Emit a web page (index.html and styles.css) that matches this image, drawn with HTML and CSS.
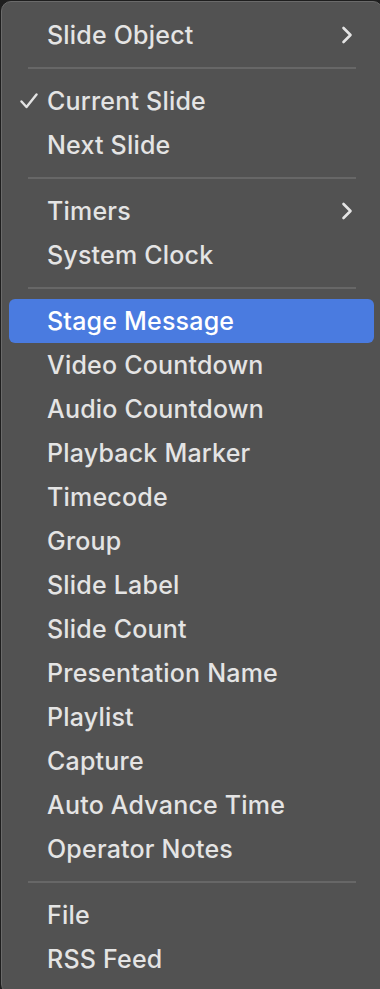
FILE: index.html
```html
<!DOCTYPE html>
<html lang="en">
<head>
    <meta charset="UTF-8">
    <meta name="viewport" content="width=device-width, initial-scale=1.0">
    <title>Stage Layout Menu</title>
    <link rel="stylesheet" href="styles.css">
</head>
<body>
<!--Menu-->
<div class="menu">
    <div class="item">
        <span class="label">Slide Object</span>
        <svg class="chevron" viewBox="0 0 12 18"><path d="M2.5 2 L9.5 9 L2.5 16"/></svg>
    </div>
    <div class="sep"></div>

    <div class="item">
        <svg class="check" viewBox="0 0 18 16"><path d="M1.5 8.5 L6.5 14 L16.5 1.5"/></svg>
        <span class="label">Current Slide</span>
    </div>
    <div class="item"><span class="label">Next Slide</span></div>
    <div class="sep"></div>

    <div class="item">
        <span class="label">Timers</span>
        <svg class="chevron" viewBox="0 0 12 18"><path d="M2.5 2 L9.5 9 L2.5 16"/></svg>
    </div>
    <div class="item"><span class="label">System Clock</span></div>
    <div class="sep"></div>

    <div class="item active"><span class="label">Stage Message</span></div>
    <div class="item"><span class="label">Video Countdown</span></div>
    <div class="item"><span class="label">Audio Countdown</span></div>
    <div class="item"><span class="label">Playback Marker</span></div>
    <div class="item"><span class="label">Timecode</span></div>
    <div class="item"><span class="label">Group</span></div>
    <div class="item"><span class="label">Slide Label</span></div>
    <div class="item"><span class="label">Slide Count</span></div>
    <div class="item"><span class="label">Presentation Name</span></div>
    <div class="item"><span class="label">Playlist</span></div>
    <div class="item"><span class="label">Capture</span></div>
    <div class="item"><span class="label">Auto Advance Time</span></div>
    <div class="item"><span class="label">Operator Notes</span></div>
    <div class="sep"></div>

    <div class="item"><span class="label">File</span></div>
    <div class="item"><span class="label">RSS Feed</span></div>
</div>
</body>
</html>
```
FILE: styles.css
```css
body {
    margin: 0;
    background: #1e1e1e;
    font-family: Inter, "Noto Sans", sans-serif;
    overflow: hidden;
}
.menu {
    box-sizing: border-box;
    width: 382px;
    margin: 1px 0 0 1px;
    padding: 11px 8px 12px 7px;
    background: #525252;
    border: 1px solid #6a6a6a;
    border-radius: 10px;
}
.item {
    position: relative;
    display: flex;
    align-items: center;
    height: 44px;
    padding: 0 21px 0 38px;
    border-radius: 6px;
    color: #e4e4e4;
    font-size: 25px;
    font-weight: 500;
    letter-spacing: 0.2px;
}
.item.active {
    background: #4a7be0;
    color: #ffffff;
}
.label {
    flex: 1;
}
.chevron {
    width: 12px;
    height: 18px;
    fill: none;
    stroke: #e4e4e4;
    stroke-width: 2.6;
    stroke-linecap: round;
    stroke-linejoin: round;
}
.check {
    position: absolute;
    left: 11px;
    top: 14px;
    width: 18px;
    height: 16px;
    fill: none;
    stroke: #e4e4e4;
    stroke-width: 2.4;
    stroke-linecap: round;
    stroke-linejoin: round;
}
.sep {
    height: 2px;
    margin: 10px 18px 10px 19px;
    background: #676767;
}
```
